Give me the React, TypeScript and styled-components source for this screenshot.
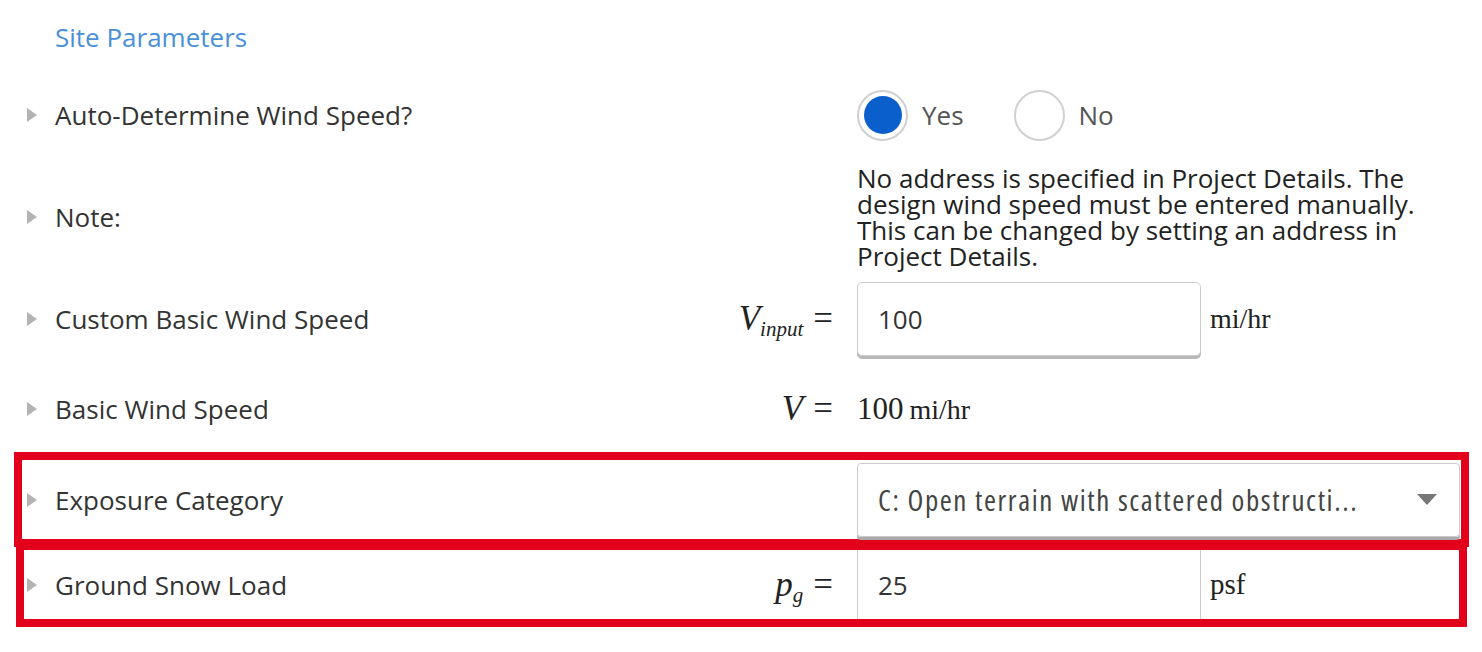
import React from 'react'
import styled, { createGlobalStyle } from 'styled-components'

const GlobalStyle = createGlobalStyle`
  html, body {
    margin: 0;
    padding: 0;
    background: #fff;
  }
  body {
    font-family: 'Open Sans', 'Noto Sans', sans-serif;
    color: #333;
  }
`

const Page = styled.main`
  width: 1482px;
  height: 652px;
  overflow: hidden;
  display: flex;
  flex-direction: column;
`

const Title = styled.h2`
  margin: 0;
  padding: 20px 0 20px 55px;
  font-size: 26px;
  line-height: 34px;
  font-weight: 400;
  color: #4a90d9;
`

const Row = styled.div<{ $h: number; $inset?: number; $pt?: number }>`
  display: grid;
  grid-template-columns: ${(p) => 55 - (p.$inset ?? 0)}px 560px 218px 24px 344px 1fr;
  align-items: center;
  height: ${(p) => p.$h}px;
  padding-top: ${(p) => p.$pt ?? 0}px;
  box-sizing: border-box;
`

const BoxedRow = styled(Row)<{ $left: number; $width: number; $shift?: number }>`
  margin-left: ${(p) => p.$left}px;
  margin-top: ${(p) => -(p.$shift ?? 0)}px;
  width: ${(p) => p.$width}px;
  border: 8px solid #e2001a;
`

const Arrow = styled.span`
  justify-self: end;
  margin-right: 18px;
  width: 0;
  height: 0;
  border-left: 10px solid #b3b3b3;
  border-top: 7px solid transparent;
  border-bottom: 7px solid transparent;
`

const Label = styled.div`
  font-size: 26px;
  color: #333;
  white-space: nowrap;
`

const MathCell = styled.div`
  justify-self: end;
  font-family: 'Liberation Serif', 'DejaVu Serif', serif;
  font-size: 35px;
  color: #222;
  white-space: nowrap;
`

const Var = styled.i``

const Sub = styled.sub`
  font-size: 21px;
  font-style: italic;
  vertical-align: -6px;
  line-height: 0;
`

const Eq = styled.span`
  margin-left: 10px;
`

const Wide = styled.div`
  grid-column: 5 / 7;
`

const Radios = styled(Wide)`
  display: flex;
  align-items: center;
`

const RadioOption = styled.label`
  display: flex;
  align-items: center;
  gap: 14px;
  margin-right: 50px;
  font-size: 26px;
  color: #555;
`

const RadioCircle = styled.span<{ $on?: boolean }>`
  width: 51px;
  height: 51px;
  box-sizing: border-box;
  border-radius: 50%;
  border: 2px solid #d0d0d0;
  display: flex;
  align-items: center;
  justify-content: center;

  &::after {
    content: '';
    width: 38px;
    height: 38px;
    border-radius: 50%;
    background: ${(p) => (p.$on ? '#0b5fcc' : 'transparent')};
  }
`

const Note = styled(Wide)`
  width: 580px;
  font-size: 26px;
  line-height: 26px;
  color: #222;
`

const TextInput = styled.input`
  width: 344px;
  height: 74px;
  box-sizing: border-box;
  border: 1.5px solid #ccc;
  border-radius: 5px;
  box-shadow: 0 3px 0 #b8b8b8;
  padding: 0 0 0 20px;
  font-family: 'Open Sans', sans-serif;
  font-size: 26px;
  color: #333;
  outline: none;
`

const CellInput = styled.input`
  align-self: stretch;
  width: 344px;
  box-sizing: border-box;
  border: none;
  border-left: 1.5px solid #ccc;
  border-right: 1.5px solid #ccc;
  padding: 0 0 0 20px;
  font-family: 'Open Sans', sans-serif;
  font-size: 26px;
  color: #333;
  outline: none;
`

const Units = styled.div<{ $size?: number }>`
  padding-left: 9px;
  font-family: 'Liberation Serif', 'DejaVu Serif', serif;
  font-size: ${(p) => p.$size ?? 28}px;
  color: #222;
`

const Value = styled(Wide)`
  font-family: 'Liberation Serif', 'DejaVu Serif', serif;
  font-size: 31px;
  color: #222;

  span {
    font-size: 28px;
    margin-left: 6px;
  }
`

const Select = styled(Wide)`
  height: 74px;
  box-sizing: border-box;
  margin-right: 1px;
  border: 1px solid #ccc;
  border-radius: 4px;
  box-shadow: 0 3px 0 #aaa;
  display: flex;
  align-items: center;
  justify-content: space-between;
  padding: 0 22px 0 20px;
`

const SelectText = styled.span`
  font-family: 'Open Sans', sans-serif;
  font-stretch: 75%;
  font-size: 29px;
  letter-spacing: 1.6px;
  color: #444;
  white-space: nowrap;
`

const Caret = styled.span`
  width: 0;
  height: 0;
  border-top: 11px solid #777;
  border-left: 10px solid transparent;
  border-right: 10px solid transparent;
`

export default function App() {
  return (
    <Page>
      <GlobalStyle />
      <Title>Site Parameters</Title>

      <Row $h={82}>
        <Arrow />
        <Label>Auto-Determine Wind Speed?</Label>
        <span />
        <span />
        <Radios>
          <RadioOption>
            <RadioCircle $on />
            Yes
          </RadioOption>
          <RadioOption>
            <RadioCircle />
            No
          </RadioOption>
        </Radios>
      </Row>

      <Row $h={122}>
        <Arrow />
        <Label>Note:</Label>
        <span />
        <span />
        <Note>
          No address is specified in Project Details. The design wind speed must be entered
          manually. This can be changed by setting an address in Project Details.
        </Note>
      </Row>

      <Row $h={82}>
        <Arrow />
        <Label>Custom Basic Wind Speed</Label>
        <MathCell>
          <Var>V</Var>
          <Sub>input</Sub>
          <Eq>=</Eq>
        </MathCell>
        <span />
        <TextInput defaultValue="100" />
        <Units>mi/hr</Units>
      </Row>

      <Row $h={92} $pt={6}>
        <Arrow />
        <Label>Basic Wind Speed</Label>
        <MathCell>
          <Var>V</Var>
          <Eq>=</Eq>
        </MathCell>
        <span />
        <Value>
          100<span>mi/hr</span>
        </Value>
      </Row>

      <BoxedRow $h={95} $inset={22} $left={14} $width={1455}>
        <Arrow />
        <Label>Exposure Category</Label>
        <span />
        <span />
        <Select>
          <SelectText>C: Open terrain with scattered obstructi...</SelectText>
          <Caret />
        </Select>
      </BoxedRow>

      <BoxedRow $h={85} $inset={24} $left={16} $width={1451} $shift={5}>
        <Arrow />
        <Label>Ground Snow Load</Label>
        <MathCell>
          <Var>p</Var>
          <Sub>g</Sub>
          <Eq>=</Eq>
        </MathCell>
        <span />
        <CellInput defaultValue="25" />
        <Units $size={29}>psf</Units>
      </BoxedRow>
    </Page>
  )
}
